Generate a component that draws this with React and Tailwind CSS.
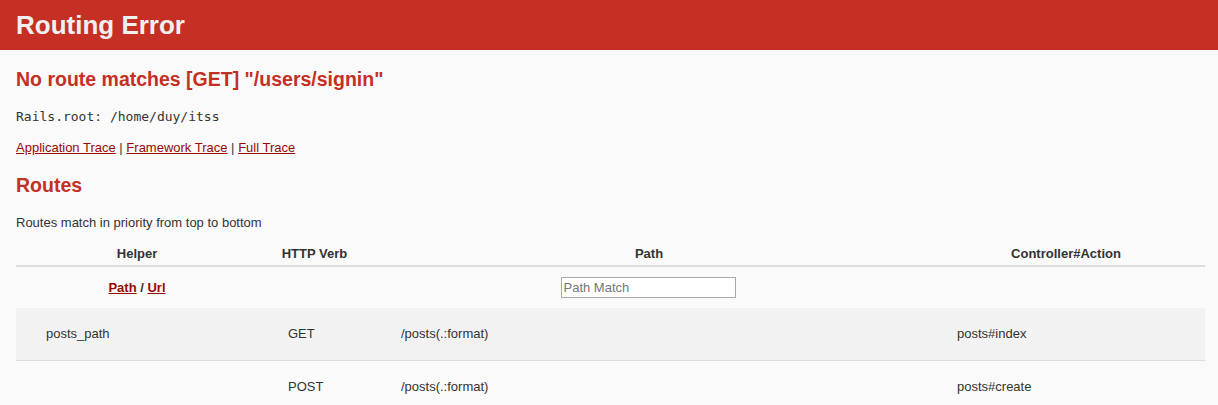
import React from "react";

const routes = [
  { helper: "posts_path", verb: "GET", path: "/posts(.:format)", action: "posts#index" },
  { helper: "", verb: "POST", path: "/posts(.:format)", action: "posts#create" },
];

const cols = "grid grid-cols-[242px_113px_556px_278px]";

export default function App() {
  return (
    <div className="min-h-screen bg-[#FAFAFA] text-[#333] font-['Liberation_Sans',Arial,sans-serif] text-[13px] leading-[18px]">
      {/* Header */}
      <header className="h-[50px] flex items-center bg-[#C52F24] px-4">
        <h1 className="text-[26px] leading-none font-bold text-[#F0F0F0]">Routing Error</h1>
      </header>

      <div className="px-4">
        <h2 className="mt-[17px] text-[19.5px] leading-[25px] font-bold text-[#C52F24]">
          No route matches [GET] "/users/signin"
        </h2>

        <p className="mt-4">
          <code className="font-['DejaVu_Sans_Mono',monospace] text-[13px]">Rails.root: /home/duy/itss</code>
        </p>

        <p className="mt-[13px]">
          <a href="#" className="underline text-[#980905]">Application Trace</a> |{" "}
          <a href="#" className="underline text-[#980905]">Framework Trace</a> |{" "}
          <a href="#" className="underline text-[#980905]">Full Trace</a>
        </p>

        <h2 className="mt-4 text-[19.5px] leading-[25px] font-bold text-[#C52F24]">Routes</h2>

        <p className="mt-4">Routes match in priority from top to bottom</p>

        {/* Route table */}
        <div className="mt-[13px] w-[1189px]">
          <div className={`${cols} h-[22px] border-b-2 border-[#ddd] font-bold text-center`}>
            <div>Helper</div>
            <div>HTTP Verb</div>
            <div>Path</div>
            <div>Controller#Action</div>
          </div>

          <div className={`${cols} h-[41px] items-center`}>
            <div className="text-center font-bold">
              <a href="#" className="underline text-[#980905]">Path</a> /{" "}
              <a href="#" className="underline text-[#980905]">Url</a>
            </div>
            <div />
            <div className="flex justify-center pr-[2px]">
              <input
                type="search"
                placeholder="Path Match"
                className="w-[175px] h-[21px] border border-[#a9a9a9] bg-white px-[2px] text-[13px] placeholder:text-[#757575] outline-none"
              />
            </div>
            <div />
          </div>

          {routes.map((r, i) => (
            <div
              key={i}
              className={`${cols} h-[53px] items-center border-b border-[#ddd] ${i % 2 === 0 ? "bg-[#f2f2f2]" : ""}`}
            >
              <div className="px-[30px]">{r.helper}</div>
              <div className="px-[30px]">{r.verb}</div>
              <div className="px-[30px]">{r.path}</div>
              <div className="px-[30px]">{r.action}</div>
            </div>
          ))}
        </div>
      </div>
    </div>
  );
}
